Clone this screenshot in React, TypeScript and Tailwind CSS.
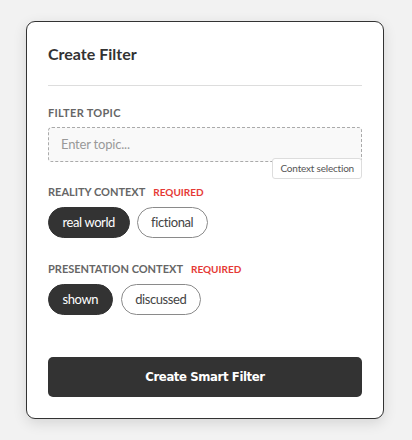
import React from "react";

function Pill({ label, active }: { label: string; active?: boolean }) {
  return active ? (
    <button className="h-[31px] px-[13.5px] rounded-full bg-[#333333] text-white text-[13px] border border-[#333333] leading-none tracking-[-0.4px]">
      {label}
    </button>
  ) : (
    <button className="h-[31px] px-[13.5px] rounded-full bg-white text-[#444444] text-[13px] border border-[#8a8a8a] leading-none tracking-[-0.4px]">
      {label}
    </button>
  );
}

export default function App() {
  return (
    <div
      className="w-[412px] h-[440px] bg-[#f2f2f2] pt-[21px] pl-[26px]"
      style={{ fontFamily: 'Lato, "Noto Sans", sans-serif' }}
    >
      <div className="w-[358px] bg-white border border-[#333333] rounded-[9px] p-[21px] shadow-[0_4px_14px_rgba(0,0,0,0.12)]">
        <div className="pb-[20px] border-b border-[#dddddd]">
          <h2 className="text-[16px] leading-[22px] font-bold text-[#333333]">Create Filter</h2>
        </div>
        <div className="mt-[20px]">
          <div className="text-[11px] leading-[14px] font-bold tracking-[0.3px] text-[#666666]">FILTER TOPIC</div>
          <div className="relative mt-[7px]">
            <div className="h-[35px] rounded-[4px] border border-dashed border-[#aaaaaa] bg-[#f9f9f9] flex items-center px-[12px] text-[13px] tracking-[-0.2px] text-[#999999]">
              Enter topic...
            </div>
            <div className="absolute right-0 top-[31px] h-[21px] px-[7px] flex items-center bg-white border border-[#dddddd] rounded-[3px] text-[10px] tracking-[-0.2px] text-[#555555]">
              Context selection
            </div>
          </div>
        </div>
        <div className="mt-[23px]">
          <div className="flex items-center gap-[8px] h-[14px]">
            <span className="text-[11px] font-bold text-[#666666]">REALITY CONTEXT</span>
            <span className="text-[10px] font-bold text-[#e53935]">REQUIRED</span>
          </div>
          <div className="flex gap-[7px] mt-[8px]">
            <Pill label="real world" active />
            <Pill label="fictional" />
          </div>
        </div>
        <div className="mt-[24px]">
          <div className="flex items-center gap-[8px] h-[14px]">
            <span className="text-[11px] font-bold text-[#666666]">PRESENTATION CONTEXT</span>
            <span className="text-[10px] font-bold text-[#e53935]">REQUIRED</span>
          </div>
          <div className="flex gap-[8px] mt-[8px]">
            <Pill label="shown" active />
            <Pill label="discussed" />
          </div>
        </div>
        <button
          className="mt-[42px] w-full h-[40px] rounded-[5px] bg-[#333333] text-white text-[13px] font-bold tracking-[-0.4px]"
          style={{ fontFamily: '"DejaVu Sans Condensed", "DejaVu Sans", sans-serif' }}
        >
          Create Smart Filter
        </button>
      </div>
    </div>
  );
}
